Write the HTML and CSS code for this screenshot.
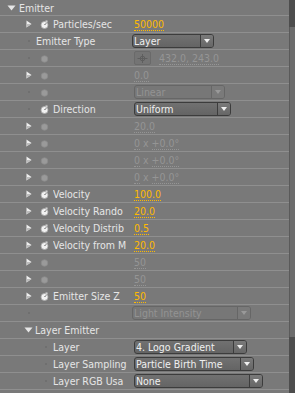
FILE: index.html
```html
<!DOCTYPE html>
<html>
<head>
<meta charset="utf-8">
<link rel="stylesheet" href="styles.css">
</head>
<body>
<div class="panel">
  <div class="list">
    <div class="row head">
      <svg class="tri-down" width="9" height="6" viewBox="0 0 9 6"><polygon points="0.5,0.5 8.5,0.5 4.5,5.5" fill="#e6e6e6"/></svg>
      <span class="htext">Emitter</span>
    </div>

    <div class="row">
      <span class="tw"><svg class="tri" width="6" height="8" viewBox="0 0 6 8"><polygon points="0.5,0.5 5.5,4 0.5,7.5" fill="#eeeeee"/><polygon points="0.5,4 5.5,4 0.5,7.5" fill="#bdbdbd"/></svg></span>
      <span class="sw"><svg class="watch" width="9" height="9" viewBox="0 0 9 9"><rect x="5.5" y="0.5" width="2" height="1.5" fill="#dcdcdc"/><circle cx="4.5" cy="5" r="3.5" fill="#f2f2f2" stroke="#a8a8a8" stroke-width="0.8"/><line x1="4.5" y1="5" x2="6.2" y2="3.3" stroke="#555" stroke-width="1"/></svg></span>
      <span class="label">Particles/sec</span>
      <span class="val on"><u>50000</u></span>
    </div>

    <div class="row">
      <span class="tw"><i class="dot"></i></span>
      <span class="label wide">Emitter Type</span>
      <span class="dd" style="width:82px"><span class="ddtext">Layer</span><span class="arr"></span></span>
    </div>

    <div class="row">
      <span class="tw"><i class="dot"></i></span>
      <span class="sw"><svg class="watch" width="9" height="9" viewBox="0 0 9 9"><circle cx="4.5" cy="5" r="3.3" fill="#9a9a9a" stroke="#8a8a8a" stroke-width="0.8"/></svg></span>
      <span class="label"></span>
      <span class="xbtn"><svg width="11" height="9" viewBox="0 0 11 9"><circle cx="5.5" cy="4.5" r="2.3" fill="none" stroke="#5e5e5e" stroke-width="1"/><line x1="0.5" y1="4.5" x2="10.5" y2="4.5" stroke="#5e5e5e"/><line x1="5.5" y1="0" x2="5.5" y2="9" stroke="#5e5e5e"/></svg></span>
      <span class="val off pos"><u>432.0, 243.0</u></span>
    </div>

    <div class="row">
      <span class="tw"><svg class="tri" width="6" height="8" viewBox="0 0 6 8"><polygon points="0.5,0.5 5.5,4 0.5,7.5" fill="#eeeeee"/><polygon points="0.5,4 5.5,4 0.5,7.5" fill="#bdbdbd"/></svg></span>
      <span class="sw"><svg class="watch" width="9" height="9" viewBox="0 0 9 9"><circle cx="4.5" cy="5" r="3.3" fill="#9a9a9a" stroke="#8a8a8a" stroke-width="0.8"/></svg></span>
      <span class="label"></span>
      <span class="val off"><u>0.0</u></span>
    </div>

    <div class="row">
      <span class="tw"><i class="dot"></i></span>
      <span class="sw"><svg class="watch" width="9" height="9" viewBox="0 0 9 9"><circle cx="4.5" cy="5" r="3.3" fill="#9a9a9a" stroke="#8a8a8a" stroke-width="0.8"/></svg></span>
      <span class="label"></span>
      <span class="dd dis" style="width:91px"><span class="ddtext">Linear</span><span class="arr"></span></span>
    </div>

    <div class="row">
      <span class="tw"><i class="dot"></i></span>
      <span class="sw"><svg class="watch" width="9" height="9" viewBox="0 0 9 9"><rect x="5.5" y="0.5" width="2" height="1.5" fill="#dcdcdc"/><circle cx="4.5" cy="5" r="3.5" fill="#f2f2f2" stroke="#a8a8a8" stroke-width="0.8"/><line x1="4.5" y1="5" x2="6.2" y2="3.3" stroke="#555" stroke-width="1"/></svg></span>
      <span class="label">Direction</span>
      <span class="dd" style="width:97px"><span class="ddtext">Uniform</span><span class="arr"></span></span>
    </div>

    <div class="row">
      <span class="tw"><svg class="tri" width="6" height="8" viewBox="0 0 6 8"><polygon points="0.5,0.5 5.5,4 0.5,7.5" fill="#eeeeee"/><polygon points="0.5,4 5.5,4 0.5,7.5" fill="#bdbdbd"/></svg></span>
      <span class="sw"><svg class="watch" width="9" height="9" viewBox="0 0 9 9"><circle cx="4.5" cy="5" r="3.3" fill="#9a9a9a" stroke="#8a8a8a" stroke-width="0.8"/></svg></span>
      <span class="label"></span>
      <span class="val off"><u>20.0</u></span>
    </div>

    <div class="row">
      <span class="tw"><svg class="tri" width="6" height="8" viewBox="0 0 6 8"><polygon points="0.5,0.5 5.5,4 0.5,7.5" fill="#eeeeee"/><polygon points="0.5,4 5.5,4 0.5,7.5" fill="#bdbdbd"/></svg></span>
      <span class="sw"><svg class="watch" width="9" height="9" viewBox="0 0 9 9"><circle cx="4.5" cy="5" r="3.3" fill="#9a9a9a" stroke="#8a8a8a" stroke-width="0.8"/></svg></span>
      <span class="label"></span>
      <span class="val off"><u>0</u> x <u>+0.0°</u></span>
    </div>

    <div class="row">
      <span class="tw"><svg class="tri" width="6" height="8" viewBox="0 0 6 8"><polygon points="0.5,0.5 5.5,4 0.5,7.5" fill="#eeeeee"/><polygon points="0.5,4 5.5,4 0.5,7.5" fill="#bdbdbd"/></svg></span>
      <span class="sw"><svg class="watch" width="9" height="9" viewBox="0 0 9 9"><circle cx="4.5" cy="5" r="3.3" fill="#9a9a9a" stroke="#8a8a8a" stroke-width="0.8"/></svg></span>
      <span class="label"></span>
      <span class="val off"><u>0</u> x <u>+0.0°</u></span>
    </div>

    <div class="row">
      <span class="tw"><svg class="tri" width="6" height="8" viewBox="0 0 6 8"><polygon points="0.5,0.5 5.5,4 0.5,7.5" fill="#eeeeee"/><polygon points="0.5,4 5.5,4 0.5,7.5" fill="#bdbdbd"/></svg></span>
      <span class="sw"><svg class="watch" width="9" height="9" viewBox="0 0 9 9"><circle cx="4.5" cy="5" r="3.3" fill="#9a9a9a" stroke="#8a8a8a" stroke-width="0.8"/></svg></span>
      <span class="label"></span>
      <span class="val off"><u>0</u> x <u>+0.0°</u></span>
    </div>

    <div class="row">
      <span class="tw"><svg class="tri" width="6" height="8" viewBox="0 0 6 8"><polygon points="0.5,0.5 5.5,4 0.5,7.5" fill="#eeeeee"/><polygon points="0.5,4 5.5,4 0.5,7.5" fill="#bdbdbd"/></svg></span>
      <span class="sw"><svg class="watch" width="9" height="9" viewBox="0 0 9 9"><rect x="5.5" y="0.5" width="2" height="1.5" fill="#dcdcdc"/><circle cx="4.5" cy="5" r="3.5" fill="#f2f2f2" stroke="#a8a8a8" stroke-width="0.8"/><line x1="4.5" y1="5" x2="6.2" y2="3.3" stroke="#555" stroke-width="1"/></svg></span>
      <span class="label">Velocity</span>
      <span class="val on"><u>100.0</u></span>
    </div>

    <div class="row">
      <span class="tw"><svg class="tri" width="6" height="8" viewBox="0 0 6 8"><polygon points="0.5,0.5 5.5,4 0.5,7.5" fill="#eeeeee"/><polygon points="0.5,4 5.5,4 0.5,7.5" fill="#bdbdbd"/></svg></span>
      <span class="sw"><svg class="watch" width="9" height="9" viewBox="0 0 9 9"><rect x="5.5" y="0.5" width="2" height="1.5" fill="#dcdcdc"/><circle cx="4.5" cy="5" r="3.5" fill="#f2f2f2" stroke="#a8a8a8" stroke-width="0.8"/><line x1="4.5" y1="5" x2="6.2" y2="3.3" stroke="#555" stroke-width="1"/></svg></span>
      <span class="label">Velocity Rando</span>
      <span class="val on"><u>20.0</u></span>
    </div>

    <div class="row">
      <span class="tw"><svg class="tri" width="6" height="8" viewBox="0 0 6 8"><polygon points="0.5,0.5 5.5,4 0.5,7.5" fill="#eeeeee"/><polygon points="0.5,4 5.5,4 0.5,7.5" fill="#bdbdbd"/></svg></span>
      <span class="sw"><svg class="watch" width="9" height="9" viewBox="0 0 9 9"><rect x="5.5" y="0.5" width="2" height="1.5" fill="#dcdcdc"/><circle cx="4.5" cy="5" r="3.5" fill="#f2f2f2" stroke="#a8a8a8" stroke-width="0.8"/><line x1="4.5" y1="5" x2="6.2" y2="3.3" stroke="#555" stroke-width="1"/></svg></span>
      <span class="label">Velocity Distrib</span>
      <span class="val on"><u>0.5</u></span>
    </div>

    <div class="row">
      <span class="tw"><svg class="tri" width="6" height="8" viewBox="0 0 6 8"><polygon points="0.5,0.5 5.5,4 0.5,7.5" fill="#eeeeee"/><polygon points="0.5,4 5.5,4 0.5,7.5" fill="#bdbdbd"/></svg></span>
      <span class="sw"><svg class="watch" width="9" height="9" viewBox="0 0 9 9"><rect x="5.5" y="0.5" width="2" height="1.5" fill="#dcdcdc"/><circle cx="4.5" cy="5" r="3.5" fill="#f2f2f2" stroke="#a8a8a8" stroke-width="0.8"/><line x1="4.5" y1="5" x2="6.2" y2="3.3" stroke="#555" stroke-width="1"/></svg></span>
      <span class="label">Velocity from M</span>
      <span class="val on"><u>20.0</u></span>
    </div>

    <div class="row">
      <span class="tw"><svg class="tri" width="6" height="8" viewBox="0 0 6 8"><polygon points="0.5,0.5 5.5,4 0.5,7.5" fill="#eeeeee"/><polygon points="0.5,4 5.5,4 0.5,7.5" fill="#bdbdbd"/></svg></span>
      <span class="sw"><svg class="watch" width="9" height="9" viewBox="0 0 9 9"><circle cx="4.5" cy="5" r="3.3" fill="#9a9a9a" stroke="#8a8a8a" stroke-width="0.8"/></svg></span>
      <span class="label"></span>
      <span class="val off"><u>50</u></span>
    </div>

    <div class="row">
      <span class="tw"><svg class="tri" width="6" height="8" viewBox="0 0 6 8"><polygon points="0.5,0.5 5.5,4 0.5,7.5" fill="#eeeeee"/><polygon points="0.5,4 5.5,4 0.5,7.5" fill="#bdbdbd"/></svg></span>
      <span class="sw"><svg class="watch" width="9" height="9" viewBox="0 0 9 9"><circle cx="4.5" cy="5" r="3.3" fill="#9a9a9a" stroke="#8a8a8a" stroke-width="0.8"/></svg></span>
      <span class="label"></span>
      <span class="val off"><u>50</u></span>
    </div>

    <div class="row">
      <span class="tw"><svg class="tri" width="6" height="8" viewBox="0 0 6 8"><polygon points="0.5,0.5 5.5,4 0.5,7.5" fill="#eeeeee"/><polygon points="0.5,4 5.5,4 0.5,7.5" fill="#bdbdbd"/></svg></span>
      <span class="sw"><svg class="watch" width="9" height="9" viewBox="0 0 9 9"><rect x="5.5" y="0.5" width="2" height="1.5" fill="#dcdcdc"/><circle cx="4.5" cy="5" r="3.5" fill="#f2f2f2" stroke="#a8a8a8" stroke-width="0.8"/><line x1="4.5" y1="5" x2="6.2" y2="3.3" stroke="#555" stroke-width="1"/></svg></span>
      <span class="label">Emitter Size Z</span>
      <span class="val on"><u>50</u></span>
    </div>

    <div class="row">
      <span class="tw"><i class="dot"></i></span>
      <span class="label wide"></span>
      <span class="dd dis" style="width:119px"><span class="ddtext">Light Intensity</span><span class="arr"></span></span>
    </div>

    <div class="row">
      <span class="tw sub"><svg class="tri-down" width="9" height="6" viewBox="0 0 9 6"><polygon points="0.5,0.5 8.5,0.5 4.5,5.5" fill="#e6e6e6"/></svg></span>
      <span class="htext">Layer Emitter</span>
    </div>

    <div class="row">
      <span class="tw"></span>
      <span class="sw"><i class="dot"></i></span>
      <span class="label">Layer</span>
      <span class="dd" style="width:113px"><span class="ddtext">4. Logo Gradient</span><span class="arr"></span></span>
    </div>

    <div class="row">
      <span class="tw"></span>
      <span class="sw"><i class="dot"></i></span>
      <span class="label">Layer Sampling</span>
      <span class="dd" style="width:120px"><span class="ddtext">Particle Birth Time</span><span class="arr"></span></span>
    </div>

    <div class="row">
      <span class="tw"></span>
      <span class="sw"><i class="dot"></i></span>
      <span class="label">Layer RGB Usa</span>
      <span class="dd" style="width:129px"><span class="ddtext">None</span><span class="arr"></span></span>
    </div>

    <div class="row">
      <span class="tw"><i class="dot"></i></span>
    </div>
  </div>
  <div class="scroll">
    <div class="thumb"></div>
  </div>
</div>
</body>
</html>
```

FILE: styles.css
```css
html, body {
  margin: 0;
  padding: 0;
  background: #797979;
}
body {
  font-family: "DejaVu Sans Condensed", "Liberation Sans", sans-serif;
  font-size: 10.5px;
  color: #e8e8e8;
  overflow: hidden;
  height: 393px;
}
.panel {
  display: flex;
  width: 295px;
  height: 393px;
  overflow: hidden;
}
.list {
  width: 289px;
  flex: none;
}
.row {
  height: 16px;
  border-bottom: 1px solid #8f8f8f;
  display: flex;
  align-items: center;
  white-space: nowrap;
  overflow: hidden;
}
.row.head {
  height: 15px;
}
.tri-down {
  margin-left: 7px;
  margin-right: 3px;
  flex: none;
}
.htext {
  color: #e6e6e6;
}
.tw {
  width: 14px;
  margin-left: 24px;
  flex: none;
  display: flex;
  align-items: center;
}
.tw.sub .tri-down {
  margin-left: 0;
  margin-right: 0;
}
.tw.sub {
  width: 11px;
}
.tri {
  margin-left: 2px;
}
.dot {
  width: 2px;
  height: 2px;
  background: #6c6c6c;
  border-radius: 1px;
  margin-left: 4px;
}
.sw {
  width: 15px;
  flex: none;
  display: flex;
  align-items: center;
}
.sw .watch {
  margin-left: 2px;
}
.sw .dot {
  margin-left: 7px;
}
.label {
  width: 77px;
  margin-right: 4px;
  flex: none;
  overflow: hidden;
  color: #e6e6e6;
}
.label.wide {
  width: 96px;
  margin-right: 0;
  margin-left: -2px;
}
.val u {
  text-decoration: none;
  border-bottom: 1px dotted currentColor;
  padding-bottom: 0;
}
.val.on {
  color: #ffbb00;
}
.val.off {
  color: #959595;
}
.val.pos {
  margin-left: 8px;
}
.dd {
  box-sizing: border-box;
  height: 14px;
  border: 1px solid #3c3c3c;
  border-radius: 3px;
  background: linear-gradient(#717171, #646464);
  display: flex;
  align-items: center;
  flex: none;
}
.ddtext {
  flex: 1;
  padding-left: 1px;
  color: #f0f0f0;
  overflow: hidden;
}
.arr {
  width: 12px;
  height: 12px;
  border-left: 1px solid #3c3c3c;
  display: flex;
  align-items: center;
  justify-content: center;
  background: linear-gradient(#7a7a7a, #666);
  border-radius: 0 2px 2px 0;
}
.arr::after {
  content: "";
  width: 0;
  height: 0;
  border-left: 3px solid transparent;
  border-right: 3px solid transparent;
  border-top: 4px solid #f0f0f0;
}
.dd.dis {
  border-color: #666;
  background: #777;
}
.dd.dis .ddtext {
  color: #939393;
}
.dd.dis .arr {
  border-left-color: #666;
  background: #7a7a7a;
}
.dd.dis .arr::after {
  border-top-color: #999;
}
.xbtn {
  box-sizing: border-box;
  width: 17px;
  height: 14px;
  border: 1px solid #6a6a6a;
  border-radius: 2px;
  background: #747474;
  display: flex;
  align-items: center;
  justify-content: center;
  flex: none;
}
.scroll {
  flex: none;
  width: 6px;
  height: 393px;
  background: #4d4d4d;
  display: flex;
  flex-direction: column;
}
.thumb {
  margin-top: 27px;
  height: 310px;
  background: #6c6c6c;
  border-left: 1px solid #5a5a5a;
}
```
